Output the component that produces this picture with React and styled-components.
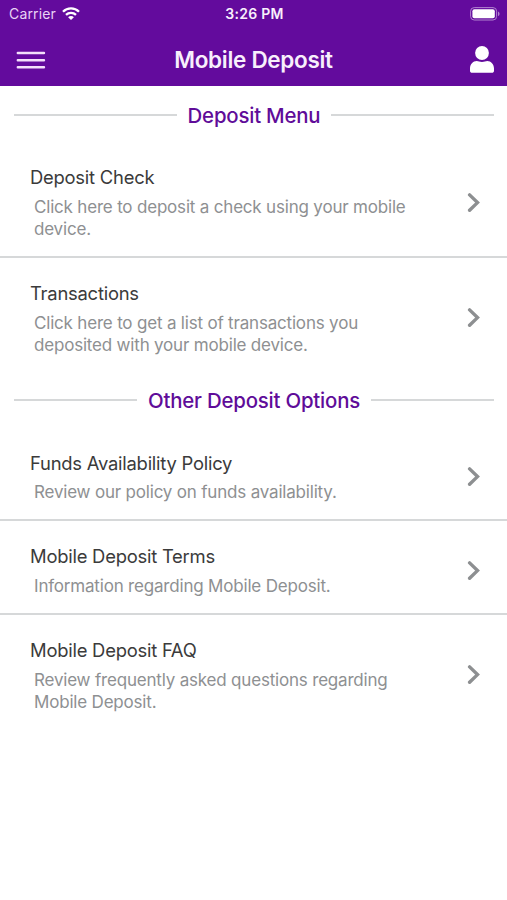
import React from "react";
import styled, { createGlobalStyle } from "styled-components";

const GlobalStyle = createGlobalStyle`
    * {
        box-sizing: border-box;
    }

    body {
        margin: 0;
        background-color: #ffffff;
        font-family: Inter, "Liberation Sans", sans-serif;
    }
`;

const Screen = styled.div`
    display: flex;
    flex-direction: column;
    width: 100%;
    min-height: 900px;
    background-color: #ffffff;
`;

const Header = styled.header`
    height: 86px;
    background-color: #630b9d;
    color: #f8effc;
`;

const StatusBar = styled.div`
    display: grid;
    grid-template-columns: 1fr auto 1fr;
    align-items: center;
    height: 27px;
    padding: 0 7px 0 9px;
    font-size: 14px;
`;

const Carrier = styled.div`
    display: flex;
    align-items: center;
    gap: 6px;
    letter-spacing: 0.15px;
    color: #e9d3f5;
`;

const Clock = styled.div`
    font-weight: 600;
    letter-spacing: 0.3px;
`;

const BatteryIcon = styled.svg`
    justify-self: end;
`;

const NavBar = styled.div`
    display: grid;
    grid-template-columns: 1fr auto 1fr;
    align-items: center;
    height: 59px;
    padding: 6px 13px 0 16px;
`;

const IconButton = styled.button`
    display: flex;
    justify-self: ${(props) => props.$side};
    padding: 0;
    border: 0;
    background: none;
    color: inherit;
`;

const PageTitle = styled.h1`
    margin: 0 3px 0 0;
    font-size: 22.5px;
    line-height: 26px;
    font-weight: 600;
    letter-spacing: -0.3px;
`;

const SectionHeading = styled.h2`
    display: flex;
    align-items: center;
    gap: 11px;
    height: 56px;
    margin: 0;
    padding: 2px 13px 0 14px;
    color: #5f0c99;
    font-size: 20.4px;
    font-weight: 500;
    letter-spacing: -0.2px;

    &::before,
    &::after {
        content: "";
        flex: 1;
        height: 2px;
        background-color: #d6d8d9;
    }
`;

const MenuList = styled.ul`
    margin: 0;
    padding: 0;
    list-style: none;
`;

const MenuItem = styled.li`
    display: flex;
    align-items: center;
    justify-content: space-between;
    padding: 23.2px 26px 15.8px 30px;

    &:not(:last-child) {
        border-bottom: 2px solid #d6d8d9;
    }
`;

const ItemText = styled.div`
    width: 400px;
`;

const ItemTitle = styled.div`
    margin-bottom: 6.7px;
    color: #3b3b3b;
    font-size: 18.4px;
    line-height: 24px;
    letter-spacing: -0.23px;
`;

const ItemDescription = styled.p`
    width: 386px;
    margin: 0;
    padding-left: 4px;
    color: #8e9092;
    font-size: 17px;
    line-height: 22px;
    letter-spacing: -0.19px;
`;

const depositItems = [
    {
        title: "Deposit Check",
        description: "Click here to deposit a check using your mobile device.",
    },
    {
        title: "Transactions",
        description:
            "Click here to get a list of transactions you deposited with your mobile device.",
    },
];

const otherItems = [
    {
        title: "Funds Availability Policy",
        description: "Review our policy on funds availability.",
    },
    {
        title: "Mobile Deposit Terms",
        description: "Information regarding Mobile Deposit.",
    },
    {
        title: "Mobile Deposit FAQ",
        description:
            "Review frequently asked questions regarding Mobile Deposit.",
    },
];

function Wifi() {
    return (
        <svg width="18" height="14" viewBox="0 0 18 14" fill="none">
            <path
                d="M1 4.7C5.4 .3 12.6 .3 17 4.7M4 7.8c2.8-2.7 7.2-2.7 10 0"
                stroke="#fff"
                strokeWidth="2.3"
            />
            <path d="M9 13.1 6.1 10.2c1.6-1.5 4.2-1.5 5.8 0z" fill="#fff" />
        </svg>
    );
}

function Battery() {
    return (
        <BatteryIcon width="30" height="14" viewBox="0 0 30 14" fill="none">
            <rect
                x=".6"
                y=".6"
                width="26"
                height="12.4"
                rx="3.6"
                stroke="#b183cf"
                strokeWidth="1"
            />
            <rect x="2.4" y="2.3" width="22.4" height="9" rx="2" fill="#fff" />
            <path d="M28 4.5c2 .8 2 3.8 0 4.6z" fill="#b183cf" />
        </BatteryIcon>
    );
}

function Hamburger() {
    return (
        <svg width="30" height="18" viewBox="0 0 30 18">
            <path
                d="M1.8 2h26.2M1.8 9.2h26.2M1.8 16.2h26.2"
                stroke="#f3e0fb"
                strokeWidth="2.4"
                strokeLinecap="round"
            />
        </svg>
    );
}

function Person() {
    return (
        <svg width="24" height="28" viewBox="0 0 24 28" fill="#fff">
            <circle cx="12" cy="7" r="6.9" />
            <path d="M6.8 15C8.4 15 9.6 16 12 16s3.6-1 5.2-1C21 15 24 18.4 24 22.4v2.3c0 1.3-.9 2.1-2.2 2.1H2.2C.9 26.8 0 26 0 24.7v-2.3c0-4 3-7.4 6.8-7.4z" />
        </svg>
    );
}

function Chevron() {
    return (
        <svg width="14" height="20" viewBox="0 0 14 20" fill="none">
            <path
                d="M2.6 1.9 10.5 9.6l-7.9 7.7"
                stroke="#8d8f91"
                strokeWidth="3.4"
                strokeLinecap="round"
            />
        </svg>
    );
}

function MenuSection({ heading, items }) {
    return (
        <section>
            <SectionHeading>{heading}</SectionHeading>
            <MenuList>
                {items.map((item) => (
                    <MenuItem key={item.title}>
                        <ItemText>
                            <ItemTitle>{item.title}</ItemTitle>
                            <ItemDescription>{item.description}</ItemDescription>
                        </ItemText>
                        <Chevron />
                    </MenuItem>
                ))}
            </MenuList>
        </section>
    );
}

function App() {
    return (
        <>
            <GlobalStyle />
            <Screen>
                <Header>
                    <StatusBar>
                        <Carrier>
                            Carrier
                            <Wifi />
                        </Carrier>
                        <Clock>3:26 PM</Clock>
                        <Battery />
                    </StatusBar>
                    <NavBar>
                        <IconButton $side="start" aria-label="Menu">
                            <Hamburger />
                        </IconButton>
                        <PageTitle>Mobile Deposit</PageTitle>
                        <IconButton $side="end" aria-label="Profile">
                            <Person />
                        </IconButton>
                    </NavBar>
                </Header>
                <MenuSection heading="Deposit Menu" items={depositItems} />
                <MenuSection heading="Other Deposit Options" items={otherItems} />
            </Screen>
        </>
    );
}

export default App;
